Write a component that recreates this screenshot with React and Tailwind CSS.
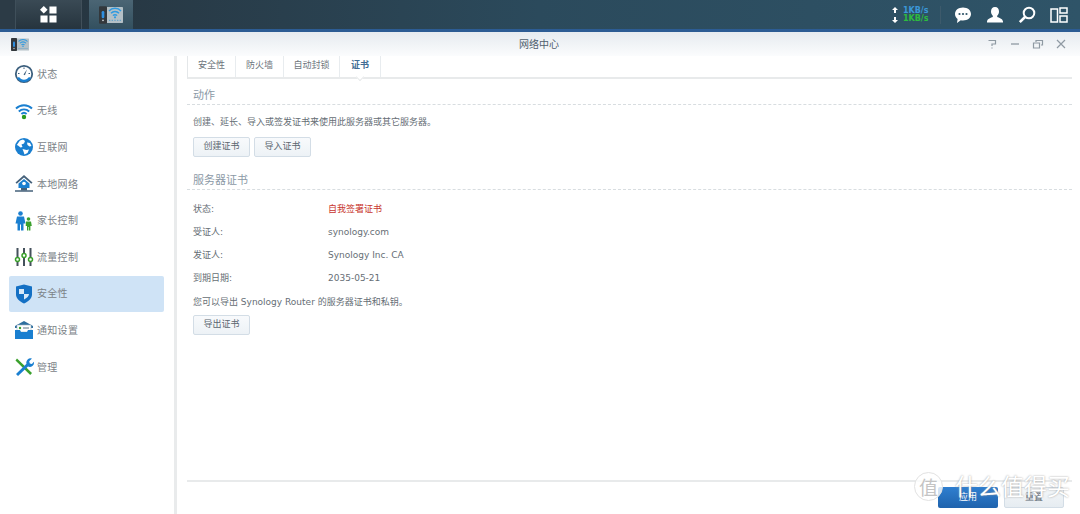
const sideItems = [
  { label: "状态", icon: "gauge" },
  { label: "无线", icon: "wifi" },
  { label: "互联网", icon: "globe" },
  { label: "本地网络", icon: "home" },
  { label: "家长控制", icon: "family" },
  { label: "流量控制", icon: "sliders" },
  { label: "安全性", icon: "shield", active: true },
  { label: "通知设置", icon: "mail" },
  { label: "管理", icon: "tools" },
];

const tabs = [
  { label: "安全性", w: "w-[48px]" },
  { label: "防火墙", w: "w-[48px]" },
  { label: "自动封锁", w: "w-[56px]" },
  { label: "证书", w: "w-[41px]", active: true },
];

const certRows = [
  { label: "状态:", value: "自我签署证书", red: true },
  { label: "受证人:", value: "synology.com" },
  { label: "发证人:", value: "Synology Inc. CA" },
  { label: "到期日期:", value: "2035-05-21" },
];

const AppIcon = ({ className }) => (
  <svg viewBox="0 0 36 28" className={className}>
    <rect x="9" y="2" width="27" height="24" rx="1" fill="#b4c0c6" />
    <rect x="0" y="1" width="12" height="26" rx="1.5" fill="#33383c" />
    <rect x="4" y="8" width="4" height="11" rx="2" fill="#2f8fe0" />
    <circle cx="6" cy="22" r="1.3" fill="#cfd6da" />
    <path d="M15 8a12 12 0 0 1 18 0M18 11.500a8 8 0 0 1 12 0M21 15a3.800 3.800 0 0 1 6 0" fill="none" stroke="#2f9ae0" strokeWidth="2.200" />
    <circle cx="24" cy="17.500" r="1.600" fill="#2f9ae0" />
    <path d="M15 22h2M19 22h2M23 22h2M27 22h2M31 22h2" stroke="#6aa5c8" strokeWidth="2" />
  </svg>
);

const SideIcon = ({ name }) => {
  const blue = "#1a7fd0";
  const green = "#3aa02c";
  if (name === "gauge")
    return (
      <svg viewBox="0 0 20 20" className="w-[20px] h-[20px]">
        <circle cx="10" cy="10" r="8.200" fill="#fff" stroke="#3c5f7d" strokeWidth="1.800" />
        <path d="M3 14a8 8 0 0 0 14 0l-2-1a6 6 0 0 1-10 0z" fill={blue} />
        <path d="M13 5.500 9.500 10.500l1.400.8z" fill="#3c5f7d" />
        <path d="M10 3.500v1.500M4 9.500h1.500M16 9.500h-1.500" stroke="#3c5f7d" strokeWidth="1" />
      </svg>
    );
  if (name === "wifi")
    return (
      <svg viewBox="0 0 20 20" className="w-[20px] h-[20px]">
        <path d="M2 7.500a11.500 11.500 0 0 1 16 0M4.800 10.500a7.500 7.500 0 0 1 10.400 0M7.400 13a3.800 3.800 0 0 1 5.200 0" fill="none" stroke={blue} strokeWidth="1.900" />
        <circle cx="10" cy="16" r="2.200" fill="#2a9a1e" />
      </svg>
    );
  if (name === "globe")
    return (
      <svg viewBox="0 0 20 20" className="w-[20px] h-[20px]">
        <circle cx="10" cy="10" r="9" fill={blue} />
        <path d="M6 3.500 9 2.500l2 1.500-1 2.500-2.500 1 1 2.500-2 .5L4 8.500l-1.200-.5zM13 5.500l3 .5 1.500 3-2 .5-2-1.500zM8.500 12l4 1 2.500-.5-1.500 3.500-3 1.500-1-3z" fill="#fff" />
      </svg>
    );
  if (name === "home")
    return (
      <svg viewBox="0 0 20 20" className="w-[20px] h-[20px]">
        <path d="M10 1 1.500 8.500l1.200 1.300L10 3.500l7.300 6.300 1.200-1.300z" fill="#45617a" />
        <path d="M4.500 9.500 10 5l5.500 4.500V14h-11z" fill={blue} />
        <circle cx="10" cy="9.500" r="1.800" fill="#fff" />
        <path d="M1 17h18" stroke="#45617a" strokeWidth="1.500" />
        <rect x="7" y="14" width="6" height="2.500" fill="#45617a" />
      </svg>
    );
  if (name === "family")
    return (
      <svg viewBox="0 0 20 20" className="w-[20px] h-[20px]">
        <circle cx="6.500" cy="2.500" r="2.300" fill={blue} />
        <path d="M3 5.500h7l1.500 7H9.500v7H7v-6H6v6H3.500v-7h-2z" fill={blue} />
        <circle cx="14.500" cy="8" r="1.800" fill={green} />
        <path d="M12 10.500h5l.8 4.500h-1.400v4.500h-1.400v-3.500h-.6v3.500h-1.400V15h-1.300z" fill={green} />
      </svg>
    );
  if (name === "sliders")
    return (
      <svg viewBox="0 0 20 20" className="w-[20px] h-[20px]">
        <path d="M3.500 1v9M3.500 15v4M10 1v5M10 11v8M16.500 1v9M16.500 15v4" stroke="#45515c" strokeWidth="2" />
        <circle cx="3.500" cy="12.500" r="2" fill="none" stroke={green} strokeWidth="1.500" />
        <circle cx="10" cy="8.500" r="2" fill="none" stroke={green} strokeWidth="1.500" />
        <circle cx="16.500" cy="12.500" r="2" fill="none" stroke={green} strokeWidth="1.500" />
      </svg>
    );
  if (name === "shield")
    return (
      <svg viewBox="0 0 20 20" className="w-[20px] h-[20px]">
        <path d="M10 .5 18 2.500v8c0 4-3.500 7-8 9-4.500-2-8-5-8-9v-8z" fill="#1470c4" />
        <path d="M5 5h5v5H5zM10 10h5c0 2-2 4-5 5.500z" fill="#d6e8f8" />
      </svg>
    );
  if (name === "mail")
    return (
      <svg viewBox="0 0 20 20" className="w-[20px] h-[20px]">
        <path d="M1 6 10 1l9 5v2H1z" fill="#2f6f9f" />
        <rect x="3" y="5" width="14" height="7" fill="#fff" stroke="#9fb4c2" strokeWidth=".6" />
        <circle cx="6" cy="8" r="1.200" fill={green} />
        <path d="M9 8h6" stroke="#5a7386" strokeWidth="1" />
        <path d="M1 10h5l1 2h6l1-2h5v9H1z" fill={blue} />
      </svg>
    );
  return (
    <svg viewBox="0 0 20 20" className="w-[20px] h-[20px]">
      <path d="M3 1.500 18 16l-1.800 2L1.500 3.500z" fill={green} />
      <path d="M2 17 12.500 6.800a4.300 4.300 0 0 1 5.500-5.300l-2.800 2.800.6 2.100 2.100.6 2-2.200a4.300 4.300 0 0 1-5.900 4.800L4 19z" fill={blue} />
    </svg>
  );
};

const CertButton = ({ children }) => (
  <button className="w-[57px] h-[20px] rounded-[2px] border border-[#d3dde6] bg-gradient-to-b from-[#f8fafc] to-[#edf2f6] text-[9px] text-[#5b6670]">
    {children}
  </button>
);

const SectionTitle = ({ children }) => (
  <div className="h-[26px] flex items-end pl-[6px] border-b border-dashed border-[#d8dde0] text-[11px] leading-[16px] text-[#8b99a6]">
    {children}
  </div>
);

const App = () => {
  return (
    <div className="relative w-[1080px] h-[514px] overflow-hidden flex flex-col bg-white font-['DejaVu_Sans','Noto_Sans_CJK_SC',sans-serif]">
      {/* top bar */}
      <div className="h-[32px] shrink-0 flex items-stretch border-b-[3px] border-[#2c5c94] bg-gradient-to-r from-[#26333d] via-[#2b4a5c] to-[#2f5468]">
        <div className="w-[16px] bg-[#2c3b46] border-r border-[#3f4f5a]" />
        <div className="w-[66px] flex items-center justify-center bg-gradient-to-b from-[#3a4a55] to-[#26343e] border-r border-[#414f5a]">
          <svg viewBox="0 0 18 18" className="w-[17px] h-[17px]">
            <path d="M4 0 8 4 4 8 0 4z" fill="#fff" />
            <path d="M10 .5h7.500V8H10zM.5 10H8v7.500H.5zM10 10h7.500v7.500H10z" fill="#fff" />
          </svg>
        </div>
        <div className="w-[44px] ml-[7px] flex items-center justify-center bg-gradient-to-b from-[#4b6574] to-[#33505f]">
          <AppIcon className="w-[24px] h-[20px]" />
        </div>
        <div className="ml-auto flex items-center pr-[12px]">
          <svg viewBox="0 0 6 16" className="w-[6px] h-[16px] mr-[5px]">
            <path d="M3 0 6 3H4v3H2V3H0zM2 10h2v3h2l-3 3-3-3h2z" fill="#fff" />
          </svg>
          <div className="flex flex-col font-bold text-[8px] leading-[8px] w-[32px]">
            <span className="text-[#3b97d8]">1KB/s</span>
            <span className="text-[#2dbb3f]">1KB/s</span>
          </div>
          <div className="w-px h-[18px] bg-[#3d5a6b] mr-[13px] ml-[5px]" />
          <svg viewBox="0 0 18 18" className="w-[18px] h-[18px] mr-[14px]">
            <path d="M9 1.500c4.700 0 8 2.800 8 6.500s-3.300 6.500-8 6.500c-.8 0-1.500-.1-2.200-.2L3 17l.6-4C2 11.800 1 10 1 8c0-3.700 3.300-6.500 8-6.500z" fill="#fff" />
            <circle cx="5.500" cy="8" r="1.100" fill="#2f5468" />
            <circle cx="9" cy="8" r="1.100" fill="#2f5468" />
            <circle cx="12.500" cy="8" r="1.100" fill="#2f5468" />
          </svg>
          <svg viewBox="0 0 18 18" className="w-[18px] h-[18px] mr-[14px]">
            <path d="M9 1c2.600 0 4 2 4 4.500 0 2-.9 3.500-1.800 4.300v1.200c1.800.8 5.300 1.400 5.800 4.500v1H1v-1c.5-3.100 4-3.700 5.800-4.500V9.800C5.900 9 5 7.500 5 5.500 5 3 6.400 1 9 1z" fill="#fff" />
          </svg>
          <svg viewBox="0 0 18 18" className="w-[18px] h-[18px] mr-[14px]">
            <circle cx="11" cy="7" r="5.300" fill="none" stroke="#fff" strokeWidth="2" />
            <path d="M7 11 1.800 16.200" stroke="#fff" strokeWidth="2.600" />
          </svg>
          <svg viewBox="0 0 18 18" className="w-[18px] h-[18px]">
            <path d="M1 3h6.500v13H1zM10 2h7v5h-7zM10 10h7v6h-7z" fill="none" stroke="#fff" strokeWidth="1.500" />
          </svg>
        </div>
      </div>

      {/* title bar */}
      <div className="h-[24px] shrink-0 flex items-center bg-gradient-to-b from-[#e6ebf0] to-[#fbfcfd] pl-[11px] pr-[9px]">
        <div className="flex-1">
          <AppIcon className="w-[18px] h-[15px]" />
        </div>
        <div className="text-center text-[10px] text-[#4f5f6e]">网络中心</div>
        <div className="flex-1 flex items-center justify-end gap-[11px] pr-[4px] text-[#8f9aa3]">
          <svg viewBox="0 0 12 12" className="w-[12px] h-[12px]"><path d="M2.500 2.500h7v3.500H6v2M6 9.500v1" fill="none" stroke="currentColor" strokeWidth="1.200" /></svg>
          <svg viewBox="0 0 12 12" className="w-[12px] h-[12px]"><path d="M2 6h8" stroke="currentColor" strokeWidth="1.300" /></svg>
          <svg viewBox="0 0 12 12" className="w-[12px] h-[12px]"><path d="M1.500 5h6v5h-6zM4 4V2.500h6.500V7H9" fill="none" stroke="currentColor" strokeWidth="1.200" /></svg>
          <svg viewBox="0 0 12 12" className="w-[12px] h-[12px]"><path d="m2 2 8 8M10 2l-8 8" stroke="currentColor" strokeWidth="1.200" /></svg>
        </div>
      </div>

      <div className="flex-1 flex min-h-0">
        {/* sidebar */}
        <div className="w-[177px] shrink-0 border-r-[3px] border-[#e9ebec] pl-[9px] pr-[10px]">
          {sideItems.map((item) => (
            <div
              key={item.label}
              className={`h-[36.6px] flex items-center gap-[3px] pl-[5px] rounded-[2px] text-[10px] tracking-[0.3px] text-[#7b8287] ${item.active ? "bg-[#cfe3f6]" : ""}`}
            >
              <SideIcon name={item.icon} />
              <span>{item.label}</span>
            </div>
          ))}
        </div>

        {/* content */}
        <div className="flex-1 flex flex-col min-w-0 ml-[10px] mr-[8px] text-[9px] text-[#666e75]">
          <div className="h-[23px] shrink-0 flex border-b-2 border-[#e8eaeb] border-l border-l-[#e4e7e9]">
            {tabs.map((tab) => (
              <div
                key={tab.label}
                className={`relative ${tab.w} flex items-center justify-center pb-[1px] border-r border-[#e8ecef] ${tab.active ? "font-bold text-[#3f6c94]" : "text-[#6d757c]"}`}
              >
                {tab.label}
                {tab.active && (
                  <span className="absolute left-1/2 -bottom-[3px] -ml-[3px] w-[6px] h-[6px] rotate-45 bg-white border-r border-b border-[#e8eaeb]" />
                )}
              </div>
            ))}
          </div>

          <SectionTitle>动作</SectionTitle>
          <div className="pl-[6px] mt-[10px] leading-[14px]">创建、延长、导入或签发证书来使用此服务器或其它服务器。</div>
          <div className="pl-[6px] mt-[8px] flex gap-[4px]">
            <CertButton>创建证书</CertButton>
            <CertButton>导入证书</CertButton>
          </div>

          <div className="mt-[7px]">
            <SectionTitle>服务器证书</SectionTitle>
          </div>
          <div className="pl-[6px] mt-[8px] flex flex-col">
            {certRows.map((row) => (
              <div key={row.label} className="h-[23.2px] flex items-center">
                <span className="w-[135px]">{row.label}</span>
                <span className={row.red ? "text-[#c8362e]" : ""}>{row.value}</span>
              </div>
            ))}
            <div className="h-[23px] flex items-center">您可以导出 Synology Router 的服务器证书和私钥。</div>
            <div className="mt-[1px]">
              <CertButton>导出证书</CertButton>
            </div>
          </div>

          <div className="mt-auto h-[34px] shrink-0 border-t-2 border-[#e8eaeb] flex justify-end items-start gap-[6px] pt-[5px] pr-[8px]">
            <button className="w-[60px] h-[21px] rounded-[2px] bg-gradient-to-b from-[#2f7fd0] to-[#1f63ad] text-[9px] text-white">应用</button>
            <button className="w-[60px] h-[21px] rounded-[2px] border border-[#d3dde6] bg-gradient-to-b from-[#f4f7f9] to-[#e6ecf1] text-[9px] text-[#5b6670]">重置</button>
          </div>
        </div>
      </div>

      {/* watermark */}
      <div className="absolute left-[914px] top-[472px] flex items-center text-white font-['Noto_Sans_CJK_SC',sans-serif]">
        <span className="w-[29px] h-[29px] rounded-full bg-white/80 border border-[#e2e2e2] flex items-center justify-center text-[19px] leading-none text-[#c4c4c4]">值</span>
        <span className="ml-[12px] -mt-[3px] text-[23px] leading-none [text-shadow:0_0_2px_#999]">什么值得买</span>
      </div>
    </div>
  );
};

export default App;
